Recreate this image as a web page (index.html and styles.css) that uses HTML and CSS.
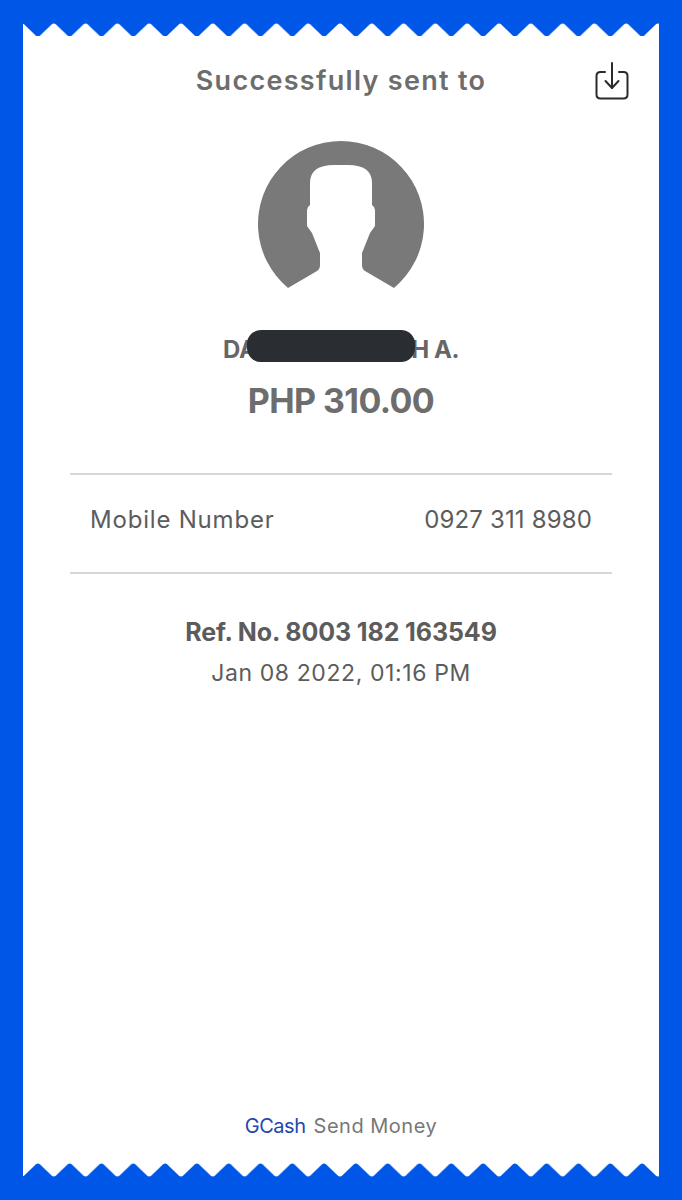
FILE: index.html
```html
<!DOCTYPE html>
<html lang="en">
<head>
    <meta charset="UTF-8">
    <meta name="viewport" content="width=device-width, initial-scale=1.0">
    <title>GCash Send Money</title>
    <link rel="stylesheet" href="styles.css">
</head>
<body>

    <div class="receipt">
        <svg class="edge" width="636" height="14" viewBox="0 0 636 14">
            <defs>
                <pattern id="teethTop" x="-1" y="0" width="31.8" height="14" patternUnits="userSpaceOnUse">
                    <path d="M0 14V0.4Q1.2 0.4 2 1.2L13.9 12.8Q15.9 14.4 17.9 12.8L29.8 1.2Q30.6 0.4 31.8 0.4V14Z" fill="#fff"/>
                </pattern>
            </defs>
            <rect width="636" height="14" fill="url(#teethTop)"/>
        </svg>

        <div class="content">
            <header class="top">
                <h1>Successfully sent to</h1>
                <svg class="save" width="36" height="40" viewBox="0 0 36 40" fill="none" stroke="#2b2b2b" stroke-width="2" stroke-linecap="round" stroke-linejoin="round">
                    <path d="M12 11H7.500Q3.500 11 3.500 15V33.500Q3.500 37.500 7.500 37.500H30.500Q34.500 37.500 34.500 33.500V15Q34.500 11 30.500 11H26"/>
                    <path d="M19 2V27"/>
                    <path d="M12.500 20L19 27L25.500 20"/>
                </svg>
            </header>

            <svg class="avatar" width="166" height="148" viewBox="0 0 166 148">
                <path fill="#787978" d="M30 146.900A83 83 0 1 1 136 146.900L107 130Q104 128 104 124V112L112 92L117 85V69Q117 66 114 64V42Q114 24 90 24H76Q52 24 52 42V64Q49 66 49 69V85L54 92L62 112V124Q62 128 59 130Z"/>
            </svg>

            <div class="name">
                <span>DA</span><span class="hidden-part"></span><span>H A.</span>
                <div class="redact"></div>
            </div>
            <div class="amount">PHP 310.00</div>

            <div class="row">
                <span class="label">Mobile Number</span>
                <span class="value">0927 311 8980</span>
            </div>

            <div class="ref">Ref. No. 8003 182 163549</div>
            <div class="date">Jan 08 2022, 01:16 PM</div>

            <footer class="foot"><span class="brand">GCash</span> Send Money</footer>
        </div>

        <svg class="edge" width="636" height="14" viewBox="0 0 636 14">
            <defs>
                <pattern id="teethBottom" x="-1" y="0" width="31.8" height="14" patternUnits="userSpaceOnUse">
                    <path d="M0 0H31.8V13.600Q30.600 13.600 29.800 12.800L17.900 1.200Q15.900 -0.400 13.900 1.200L2 12.800Q1.200 13.600 0 13.600Z" fill="#fff"/>
                </pattern>
            </defs>
            <rect width="636" height="14" fill="url(#teethBottom)"/>
        </svg>
    </div>

</body>
</html>
```

FILE: styles.css
```css
body {
    margin: 0;
    background-color: #0057e7;
    font-family: "Inter", "Open Sans", sans-serif;
    color: #666;
}

.receipt {
    width: 636px;
    margin: 23px 0 0 23px;
}

.edge {
    display: block;
}

.content {
    position: relative;
    height: 1127px;
    margin-top: -1px;
    padding: 0 47px;
    box-sizing: border-box;
    background-color: #fff;
    text-align: center;
}

.top {
    position: relative;
    padding-top: 29px;
}

h1 {
    margin: 0;
    font-size: 27px;
    line-height: 32px;
    font-weight: 600;
    letter-spacing: 1.3px;
    color: #6d6d6d;
}

.save {
    position: absolute;
    top: 25px;
    right: -17px;
}

.avatar {
    display: block;
    margin: 44px auto 0;
}

.name {
    position: relative;
    display: flex;
    justify-content: center;
    margin-top: 46px;
    font-size: 24px;
    line-height: 30px;
    font-weight: 700;
    letter-spacing: -0.5px;
    color: #666;
}

.hidden-part {
    width: 155px;
}

.redact {
    position: absolute;
    top: -5px;
    left: 177px;
    width: 168px;
    height: 32px;
    border-radius: 14px;
    background-color: #2a2e32;
}

.amount {
    margin-top: 16px;
    font-size: 34px;
    line-height: 40px;
    font-weight: 700;
    letter-spacing: -0.6px;
    color: #6d6d6d;
}

.row {
    display: flex;
    justify-content: space-between;
    margin-top: 52px;
    padding: 22px 20px 29px;
    border-top: 2px solid #d6d6d6;
    border-bottom: 2px solid #d6d6d6;
    font-size: 24px;
    line-height: 46px;
    color: #5c5c5c;
}

.label {
    letter-spacing: 0.8px;
}

.value {
    letter-spacing: 0.15px;
}

.ref {
    margin-top: 42px;
    font-size: 25px;
    line-height: 32px;
    font-weight: 700;
    letter-spacing: -0.1px;
    color: #5c5c5c;
}

.date {
    margin-top: 9px;
    font-size: 23px;
    line-height: 32px;
    letter-spacing: 0.6px;
    color: #5c5c5c;
}

.foot {
    position: absolute;
    left: 0;
    right: 0;
    bottom: 23px;
    font-size: 20px;
    line-height: 28px;
    letter-spacing: 0.5px;
    color: #777;
}

.brand {
    margin-right: 2px;
    color: #1f48ad;
    letter-spacing: -0.5px;
}
```
